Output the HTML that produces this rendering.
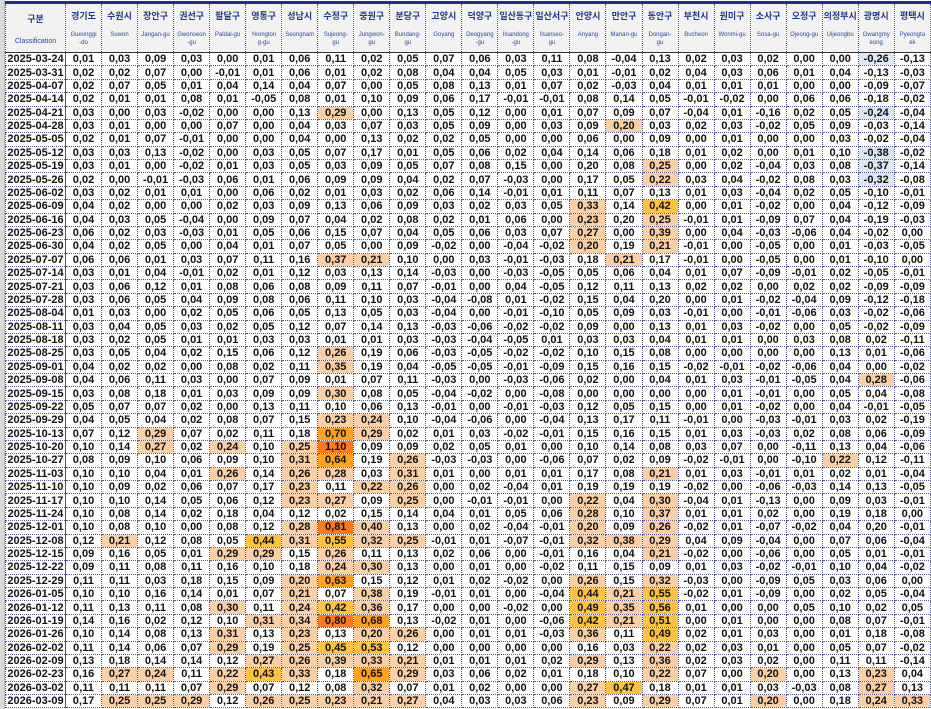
<!DOCTYPE html>
<html><head><meta charset="utf-8">
<style>
html,body{margin:0;padding:0;background:#fff;width:931px;height:709px;overflow:hidden}
.wrap{position:absolute;left:0;top:0;width:931px;height:709px}
.strip{position:absolute;left:0;top:0;width:4px;height:709px;background:#d9d9d9;border-right:1px solid #bdbdbd}
table{position:absolute;left:5px;top:1px;border-collapse:collapse;table-layout:fixed;width:926px;font-family:"Liberation Sans","Noto Sans CJK KR",sans-serif}
col.dc{width:60px}
td,th{border:1px dotted #5a5a8c;padding:0;text-align:center;overflow:hidden;white-space:nowrap}
thead th{border-top:3px solid #1c2f8c;border-bottom:1px solid #333;background:#f2f2f2;height:48px;vertical-align:top;color:#1f3a8a;font-weight:bold}
thead th .k{display:block;font-size:9px;margin-top:7px;height:20px;line-height:11px}
thead th .e{display:block;font-size:6px;line-height:8px;color:#2a4aa0;font-weight:normal}
tbody tr{height:13.38px}
tbody th{font-size:11px;font-weight:bold;color:#111;border-right:1px solid #555;text-align:center;padding:0;line-height:12px;background:#fff}
td{font-size:11px;font-weight:bold;color:#111;line-height:12px}
.a{background:#fbcfa6}.b{background:#fdc23e}.c{background:#ffa11c}.d{background:#ff781c}.n{background:#dce9f4}
</style></head><body><div class="wrap"><div class="strip"></div>
<table>
<colgroup><col class="dc"><col span="24"></colgroup>
<thead><tr>
<th><span class="k" style="margin-top:10px">구분</span><span class="e" style="font-size:7px;margin-top:4px">Classification</span></th>
<th><span class="k">경기도</span><span class="e">Gueonggi<br>-do</span></th>
<th><span class="k">수원시</span><span class="e">Suwon</span></th>
<th><span class="k">장안구</span><span class="e">Jangan-gu</span></th>
<th><span class="k">권선구</span><span class="e">Gwonseon<br>-gu</span></th>
<th><span class="k">팔달구</span><span class="e">Paldal-gu</span></th>
<th><span class="k">영통구</span><span class="e">Yeongton<br>g-gu</span></th>
<th><span class="k">성남시</span><span class="e">Seongnam</span></th>
<th><span class="k">수정구</span><span class="e">Sujeong-<br>gu</span></th>
<th><span class="k">중원구</span><span class="e">Jungwon-<br>gu</span></th>
<th><span class="k">분당구</span><span class="e">Bundang-<br>gu</span></th>
<th><span class="k">고양시</span><span class="e">Goyang</span></th>
<th><span class="k">덕양구</span><span class="e">Deogyang<br>-gu</span></th>
<th><span class="k">일산동구</span><span class="e">Ilsandong<br>-gu</span></th>
<th><span class="k">일산서구</span><span class="e">Ilsanseo-<br>gu</span></th>
<th><span class="k">안양시</span><span class="e">Anyang</span></th>
<th><span class="k">만안구</span><span class="e">Manan-gu</span></th>
<th><span class="k">동안구</span><span class="e">Dongan-<br>gu</span></th>
<th><span class="k">부천시</span><span class="e">Bucheon</span></th>
<th><span class="k">원미구</span><span class="e">Wonmi-gu</span></th>
<th><span class="k">소사구</span><span class="e">Sosa-gu</span></th>
<th><span class="k">오정구</span><span class="e">Ojeong-gu</span></th>
<th><span class="k">의정부시</span><span class="e">Uijeongbu</span></th>
<th><span class="k">광명시</span><span class="e">Gwangmy<br>eong</span></th>
<th><span class="k">평택시</span><span class="e">Pyeongta<br>ek</span></th>
</tr></thead>
<tbody>
<tr><th>2025-03-24</th><td>0,01</td><td>0,03</td><td>0,09</td><td>0,03</td><td>0,00</td><td>0,01</td><td>0,06</td><td>0,11</td><td>0,02</td><td>0,05</td><td>0,07</td><td>0,06</td><td>0,03</td><td>0,11</td><td>0,08</td><td>-0,04</td><td>0,13</td><td>0,02</td><td>0,03</td><td>0,02</td><td>0,00</td><td>0,00</td><td class="n">-0,26</td><td>-0,13</td></tr>
<tr><th>2025-03-31</th><td>0,02</td><td>0,02</td><td>0,07</td><td>0,00</td><td>-0,01</td><td>0,01</td><td>0,06</td><td>0,01</td><td>0,02</td><td>0,08</td><td>0,04</td><td>0,04</td><td>0,05</td><td>0,03</td><td>0,01</td><td>-0,01</td><td>0,02</td><td>0,04</td><td>0,03</td><td>0,06</td><td>0,01</td><td>0,04</td><td>-0,13</td><td>-0,03</td></tr>
<tr><th>2025-04-07</th><td>0,02</td><td>0,07</td><td>0,05</td><td>0,01</td><td>0,04</td><td>0,14</td><td>0,04</td><td>0,07</td><td>0,00</td><td>0,05</td><td>0,08</td><td>0,13</td><td>0,01</td><td>0,07</td><td>0,02</td><td>-0,03</td><td>0,04</td><td>0,01</td><td>0,01</td><td>0,01</td><td>0,00</td><td>0,00</td><td>-0,09</td><td>-0,07</td></tr>
<tr><th>2025-04-14</th><td>0,02</td><td>0,01</td><td>0,01</td><td>0,08</td><td>0,01</td><td>-0,05</td><td>0,08</td><td>0,01</td><td>0,10</td><td>0,09</td><td>0,06</td><td>0,17</td><td>-0,01</td><td>-0,01</td><td>0,08</td><td>0,14</td><td>0,05</td><td>-0,01</td><td>-0,02</td><td>0,00</td><td>0,06</td><td>0,06</td><td>-0,18</td><td>-0,02</td></tr>
<tr><th>2025-04-21</th><td>0,03</td><td>0,00</td><td>0,03</td><td>-0,02</td><td>0,00</td><td>0,00</td><td>0,13</td><td class="a">0,29</td><td>0,00</td><td>0,13</td><td>0,05</td><td>0,12</td><td>0,00</td><td>0,01</td><td>0,07</td><td>0,09</td><td>0,07</td><td>-0,04</td><td>0,01</td><td>-0,16</td><td>0,02</td><td>0,05</td><td class="n">-0,24</td><td>-0,04</td></tr>
<tr><th>2025-04-28</th><td>0,03</td><td>0,01</td><td>0,00</td><td>0,00</td><td>0,07</td><td>0,00</td><td>0,04</td><td>0,03</td><td>0,07</td><td>0,03</td><td>0,05</td><td>0,09</td><td>0,00</td><td>0,03</td><td>0,09</td><td class="a">0,20</td><td>0,03</td><td>0,02</td><td>0,03</td><td>-0,02</td><td>0,05</td><td>0,09</td><td>-0,03</td><td>-0,14</td></tr>
<tr><th>2025-05-05</th><td>0,02</td><td>0,01</td><td>0,07</td><td>-0,01</td><td>0,00</td><td>0,00</td><td>0,04</td><td>0,00</td><td>0,13</td><td>0,02</td><td>0,02</td><td>0,05</td><td>0,00</td><td>0,00</td><td>0,06</td><td>0,00</td><td>0,09</td><td>0,00</td><td>0,01</td><td>0,00</td><td>0,00</td><td>0,03</td><td>-0,02</td><td>-0,04</td></tr>
<tr><th>2025-05-12</th><td>0,03</td><td>0,03</td><td>0,13</td><td>-0,02</td><td>0,00</td><td>0,03</td><td>0,05</td><td>0,07</td><td>0,17</td><td>0,01</td><td>0,05</td><td>0,06</td><td>0,02</td><td>0,04</td><td>0,14</td><td>0,06</td><td>0,18</td><td>0,01</td><td>0,02</td><td>0,00</td><td>0,01</td><td>0,10</td><td class="n">-0,38</td><td>-0,02</td></tr>
<tr><th>2025-05-19</th><td>0,03</td><td>0,01</td><td>0,00</td><td>-0,02</td><td>0,01</td><td>0,03</td><td>0,05</td><td>0,03</td><td>0,09</td><td>0,05</td><td>0,07</td><td>0,08</td><td>0,15</td><td>0,00</td><td>0,20</td><td>0,08</td><td class="a">0,25</td><td>0,00</td><td>0,02</td><td>-0,04</td><td>0,03</td><td>0,08</td><td class="n">-0,37</td><td>-0,14</td></tr>
<tr><th>2025-05-26</th><td>0,02</td><td>0,00</td><td>-0,01</td><td>-0,03</td><td>0,06</td><td>0,01</td><td>0,06</td><td>0,09</td><td>0,09</td><td>0,04</td><td>0,02</td><td>0,07</td><td>-0,03</td><td>0,00</td><td>0,17</td><td>0,05</td><td class="a">0,22</td><td>0,03</td><td>0,04</td><td>-0,02</td><td>0,08</td><td>0,03</td><td class="n">-0,32</td><td>-0,08</td></tr>
<tr><th>2025-06-02</th><td>0,03</td><td>0,02</td><td>0,01</td><td>0,01</td><td>0,00</td><td>0,06</td><td>0,02</td><td>0,01</td><td>0,03</td><td>0,02</td><td>0,06</td><td>0,14</td><td>-0,01</td><td>0,01</td><td>0,11</td><td>0,07</td><td>0,13</td><td>0,01</td><td>0,03</td><td>-0,04</td><td>0,02</td><td>0,05</td><td>-0,10</td><td>-0,01</td></tr>
<tr><th>2025-06-09</th><td>0,04</td><td>0,02</td><td>0,00</td><td>0,00</td><td>0,02</td><td>0,03</td><td>0,09</td><td>0,13</td><td>0,06</td><td>0,09</td><td>0,03</td><td>0,02</td><td>0,03</td><td>0,05</td><td class="a">0,33</td><td>0,14</td><td class="b">0,42</td><td>0,00</td><td>0,01</td><td>-0,02</td><td>0,00</td><td>0,04</td><td>-0,12</td><td>-0,09</td></tr>
<tr><th>2025-06-16</th><td>0,04</td><td>0,03</td><td>0,05</td><td>-0,04</td><td>0,00</td><td>0,09</td><td>0,07</td><td>0,04</td><td>0,02</td><td>0,08</td><td>0,02</td><td>0,01</td><td>0,06</td><td>0,00</td><td class="a">0,23</td><td>0,20</td><td class="a">0,25</td><td>-0,01</td><td>0,01</td><td>-0,09</td><td>0,07</td><td>0,04</td><td>-0,19</td><td>-0,03</td></tr>
<tr><th>2025-06-23</th><td>0,06</td><td>0,02</td><td>0,03</td><td>-0,03</td><td>0,01</td><td>0,05</td><td>0,06</td><td>0,15</td><td>0,07</td><td>0,04</td><td>0,05</td><td>0,06</td><td>0,03</td><td>0,07</td><td class="a">0,27</td><td>0,00</td><td class="a">0,39</td><td>0,00</td><td>0,04</td><td>-0,03</td><td>-0,06</td><td>0,04</td><td>-0,02</td><td>0,00</td></tr>
<tr><th>2025-06-30</th><td>0,04</td><td>0,02</td><td>0,05</td><td>0,00</td><td>0,04</td><td>0,01</td><td>0,07</td><td>0,05</td><td>0,00</td><td>0,09</td><td>-0,02</td><td>0,00</td><td>-0,04</td><td>-0,02</td><td class="a">0,20</td><td>0,19</td><td class="a">0,21</td><td>-0,01</td><td>0,00</td><td>-0,05</td><td>0,00</td><td>0,01</td><td>-0,03</td><td>-0,05</td></tr>
<tr><th>2025-07-07</th><td>0,06</td><td>0,06</td><td>0,01</td><td>0,03</td><td>0,07</td><td>0,11</td><td>0,16</td><td class="a">0,37</td><td class="a">0,21</td><td>0,10</td><td>0,00</td><td>0,03</td><td>-0,01</td><td>-0,03</td><td>0,18</td><td class="a">0,21</td><td>0,17</td><td>-0,01</td><td>0,00</td><td>-0,05</td><td>0,00</td><td>0,01</td><td>-0,10</td><td>0,00</td></tr>
<tr><th>2025-07-14</th><td>0,03</td><td>0,01</td><td>0,04</td><td>-0,01</td><td>0,02</td><td>0,01</td><td>0,12</td><td>0,03</td><td>0,13</td><td>0,14</td><td>-0,03</td><td>0,00</td><td>-0,03</td><td>-0,05</td><td>0,05</td><td>0,06</td><td>0,04</td><td>0,01</td><td>0,07</td><td>-0,09</td><td>-0,01</td><td>0,02</td><td>-0,05</td><td>-0,01</td></tr>
<tr><th>2025-07-21</th><td>0,03</td><td>0,06</td><td>0,12</td><td>0,01</td><td>0,08</td><td>0,06</td><td>0,08</td><td>0,09</td><td>0,11</td><td>0,07</td><td>-0,01</td><td>0,00</td><td>0,04</td><td>-0,05</td><td>0,12</td><td>0,11</td><td>0,13</td><td>0,02</td><td>0,02</td><td>0,00</td><td>0,02</td><td>0,02</td><td>-0,09</td><td>-0,09</td></tr>
<tr><th>2025-07-28</th><td>0,03</td><td>0,06</td><td>0,05</td><td>0,04</td><td>0,09</td><td>0,08</td><td>0,06</td><td>0,11</td><td>0,10</td><td>0,03</td><td>-0,04</td><td>-0,08</td><td>0,01</td><td>-0,02</td><td>0,15</td><td>0,04</td><td>0,20</td><td>0,00</td><td>0,01</td><td>-0,02</td><td>-0,04</td><td>0,09</td><td>-0,12</td><td>-0,18</td></tr>
<tr><th>2025-08-04</th><td>0,01</td><td>0,03</td><td>0,00</td><td>0,02</td><td>0,05</td><td>0,06</td><td>0,05</td><td>0,13</td><td>0,05</td><td>0,03</td><td>-0,04</td><td>0,00</td><td>-0,01</td><td>-0,10</td><td>0,05</td><td>0,09</td><td>0,03</td><td>-0,01</td><td>0,00</td><td>-0,01</td><td>-0,06</td><td>0,03</td><td>-0,02</td><td>-0,06</td></tr>
<tr><th>2025-08-11</th><td>0,03</td><td>0,04</td><td>0,05</td><td>0,03</td><td>0,02</td><td>0,05</td><td>0,12</td><td>0,07</td><td>0,14</td><td>0,13</td><td>-0,03</td><td>-0,06</td><td>-0,02</td><td>-0,02</td><td>0,09</td><td>0,00</td><td>0,13</td><td>0,01</td><td>0,03</td><td>-0,02</td><td>0,00</td><td>0,05</td><td>-0,02</td><td>-0,09</td></tr>
<tr><th>2025-08-18</th><td>0,03</td><td>0,02</td><td>0,05</td><td>0,01</td><td>0,01</td><td>0,03</td><td>0,03</td><td>0,01</td><td>0,01</td><td>0,03</td><td>-0,03</td><td>-0,04</td><td>-0,05</td><td>0,01</td><td>0,03</td><td>0,03</td><td>0,04</td><td>0,01</td><td>0,01</td><td>0,00</td><td>0,03</td><td>0,08</td><td>0,02</td><td>-0,11</td></tr>
<tr><th>2025-08-25</th><td>0,03</td><td>0,05</td><td>0,04</td><td>0,02</td><td>0,15</td><td>0,06</td><td>0,12</td><td class="a">0,26</td><td>0,19</td><td>0,06</td><td>-0,03</td><td>-0,05</td><td>-0,02</td><td>-0,02</td><td>0,10</td><td>0,15</td><td>0,08</td><td>0,00</td><td>0,00</td><td>0,00</td><td>0,00</td><td>0,13</td><td>0,01</td><td>-0,06</td></tr>
<tr><th>2025-09-01</th><td>0,04</td><td>0,02</td><td>0,02</td><td>0,00</td><td>0,08</td><td>0,02</td><td>0,11</td><td class="a">0,35</td><td>0,19</td><td>0,04</td><td>-0,05</td><td>-0,05</td><td>-0,01</td><td>-0,09</td><td>0,15</td><td>0,16</td><td>0,15</td><td>-0,02</td><td>-0,01</td><td>-0,02</td><td>-0,06</td><td>0,04</td><td>0,00</td><td>-0,02</td></tr>
<tr><th>2025-09-08</th><td>0,04</td><td>0,06</td><td>0,11</td><td>0,03</td><td>0,00</td><td>0,07</td><td>0,09</td><td>0,01</td><td>0,07</td><td>0,11</td><td>-0,03</td><td>0,00</td><td>-0,03</td><td>-0,06</td><td>0,02</td><td>0,00</td><td>0,04</td><td>0,01</td><td>0,03</td><td>-0,01</td><td>-0,05</td><td>0,04</td><td class="a">0,28</td><td>-0,06</td></tr>
<tr><th>2025-09-15</th><td>0,03</td><td>0,08</td><td>0,18</td><td>0,01</td><td>0,03</td><td>0,09</td><td>0,09</td><td class="a">0,30</td><td>0,08</td><td>0,05</td><td>-0,04</td><td>-0,02</td><td>0,00</td><td>-0,08</td><td>0,00</td><td>0,00</td><td>0,00</td><td>0,00</td><td>0,01</td><td>-0,01</td><td>0,00</td><td>0,05</td><td>0,04</td><td>-0,08</td></tr>
<tr><th>2025-09-22</th><td>0,05</td><td>0,07</td><td>0,07</td><td>0,02</td><td>0,00</td><td>0,13</td><td>0,11</td><td>0,10</td><td>0,06</td><td>0,13</td><td>-0,01</td><td>0,00</td><td>-0,01</td><td>-0,03</td><td>0,12</td><td>0,05</td><td>0,15</td><td>0,00</td><td>0,01</td><td>-0,02</td><td>0,00</td><td>0,04</td><td>-0,01</td><td>-0,05</td></tr>
<tr><th>2025-09-29</th><td>0,04</td><td>0,05</td><td>0,04</td><td>0,02</td><td>0,08</td><td>0,07</td><td>0,15</td><td class="a">0,23</td><td class="a">0,24</td><td>0,10</td><td>-0,04</td><td>-0,06</td><td>0,00</td><td>-0,04</td><td>0,13</td><td>0,17</td><td>0,11</td><td>-0,01</td><td>0,00</td><td>-0,03</td><td>-0,01</td><td>0,03</td><td>0,02</td><td>-0,19</td></tr>
<tr><th>2025-10-13</th><td>0,07</td><td>0,12</td><td class="a">0,29</td><td>0,07</td><td>0,02</td><td>0,11</td><td>0,18</td><td class="c">0,70</td><td class="a">0,29</td><td>0,02</td><td>0,01</td><td>0,03</td><td>-0,02</td><td>-0,01</td><td>0,15</td><td>0,16</td><td>0,15</td><td>0,01</td><td>0,03</td><td>-0,03</td><td>0,02</td><td>0,08</td><td>0,06</td><td>-0,09</td></tr>
<tr><th>2025-10-20</th><td>0,10</td><td>0,14</td><td class="a">0,27</td><td>0,02</td><td class="a">0,24</td><td>0,10</td><td class="a">0,25</td><td class="d">1,10</td><td>0,09</td><td>0,09</td><td>0,02</td><td>0,05</td><td>0,01</td><td>0,00</td><td>0,10</td><td>0,14</td><td>0,08</td><td>0,03</td><td>0,07</td><td>0,00</td><td>-0,11</td><td>0,13</td><td>0,04</td><td>-0,06</td></tr>
<tr><th>2025-10-27</th><td>0,08</td><td>0,09</td><td>0,10</td><td>0,06</td><td>0,09</td><td>0,10</td><td class="a">0,31</td><td class="c">0,64</td><td>0,19</td><td class="a">0,26</td><td>-0,03</td><td>-0,03</td><td>0,00</td><td>-0,06</td><td>0,07</td><td>0,02</td><td>0,09</td><td>-0,02</td><td>-0,01</td><td>0,00</td><td>-0,10</td><td class="a">0,22</td><td>0,12</td><td>-0,11</td></tr>
<tr><th>2025-11-03</th><td>0,10</td><td>0,10</td><td>0,04</td><td>0,01</td><td class="a">0,26</td><td>0,14</td><td class="a">0,26</td><td class="a">0,28</td><td>0,03</td><td class="a">0,31</td><td>0,01</td><td>0,00</td><td>0,01</td><td>0,01</td><td>0,17</td><td>0,08</td><td class="a">0,21</td><td>0,01</td><td>0,03</td><td>-0,01</td><td>0,01</td><td>0,02</td><td>0,01</td><td>-0,04</td></tr>
<tr><th>2025-11-10</th><td>0,10</td><td>0,09</td><td>0,02</td><td>0,06</td><td>0,07</td><td>0,17</td><td class="a">0,23</td><td>0,11</td><td class="a">0,22</td><td class="a">0,26</td><td>0,00</td><td>0,02</td><td>-0,04</td><td>0,01</td><td>0,19</td><td>0,19</td><td>0,19</td><td>-0,02</td><td>0,00</td><td>-0,06</td><td>-0,03</td><td>0,14</td><td>0,13</td><td>-0,05</td></tr>
<tr><th>2025-11-17</th><td>0,10</td><td>0,10</td><td>0,14</td><td>0,05</td><td>0,06</td><td>0,12</td><td class="a">0,23</td><td class="a">0,27</td><td>0,09</td><td class="a">0,25</td><td>0,00</td><td>-0,01</td><td>-0,01</td><td>0,00</td><td class="a">0,22</td><td>0,04</td><td class="a">0,30</td><td>-0,04</td><td>0,01</td><td>-0,13</td><td>0,00</td><td>0,09</td><td>0,03</td><td>-0,01</td></tr>
<tr><th>2025-11-24</th><td>0,10</td><td>0,08</td><td>0,14</td><td>0,02</td><td>0,18</td><td>0,04</td><td>0,12</td><td>0,02</td><td>0,15</td><td>0,14</td><td>0,04</td><td>0,01</td><td>0,05</td><td>0,06</td><td class="a">0,28</td><td>0,10</td><td class="a">0,37</td><td>0,01</td><td>0,01</td><td>0,02</td><td>0,00</td><td>0,19</td><td>0,18</td><td>0,00</td></tr>
<tr><th>2025-12-01</th><td>0,10</td><td>0,08</td><td>0,10</td><td>0,00</td><td>0,08</td><td>0,12</td><td class="a">0,28</td><td class="d">0,81</td><td class="a">0,40</td><td>0,13</td><td>0,00</td><td>0,02</td><td>-0,04</td><td>-0,01</td><td class="a">0,20</td><td>0,09</td><td class="a">0,26</td><td>-0,02</td><td>0,01</td><td>-0,07</td><td>-0,02</td><td>0,04</td><td>0,20</td><td>-0,01</td></tr>
<tr><th>2025-12-08</th><td>0,12</td><td class="a">0,21</td><td>0,12</td><td>0,08</td><td>0,05</td><td class="b">0,44</td><td class="a">0,31</td><td class="b">0,55</td><td class="a">0,32</td><td class="a">0,25</td><td>-0,01</td><td>0,01</td><td>-0,07</td><td>-0,01</td><td class="a">0,32</td><td class="a">0,38</td><td class="a">0,29</td><td>0,04</td><td>0,09</td><td>-0,04</td><td>0,00</td><td>0,07</td><td>0,06</td><td>-0,04</td></tr>
<tr><th>2025-12-15</th><td>0,09</td><td>0,16</td><td>0,05</td><td>0,01</td><td class="a">0,29</td><td class="a">0,29</td><td>0,15</td><td class="a">0,26</td><td>0,11</td><td>0,13</td><td>0,02</td><td>0,06</td><td>0,00</td><td>-0,01</td><td>0,16</td><td>0,04</td><td class="a">0,21</td><td>-0,02</td><td>0,00</td><td>-0,06</td><td>0,00</td><td>0,05</td><td>0,01</td><td>-0,01</td></tr>
<tr><th>2025-12-22</th><td>0,09</td><td>0,11</td><td>0,08</td><td>0,11</td><td>0,16</td><td>0,10</td><td>0,18</td><td class="a">0,24</td><td class="a">0,30</td><td>0,13</td><td>0,00</td><td>0,01</td><td>0,00</td><td>-0,02</td><td>0,11</td><td>0,15</td><td>0,09</td><td>0,01</td><td>0,03</td><td>-0,02</td><td>-0,01</td><td>0,10</td><td>0,04</td><td>-0,02</td></tr>
<tr><th>2025-12-29</th><td>0,11</td><td>0,11</td><td>0,03</td><td>0,18</td><td>0,15</td><td>0,09</td><td class="a">0,20</td><td class="c">0,63</td><td>0,15</td><td>0,12</td><td>0,01</td><td>0,02</td><td>-0,02</td><td>0,00</td><td class="a">0,26</td><td>0,15</td><td class="a">0,32</td><td>-0,03</td><td>0,00</td><td>-0,09</td><td>0,05</td><td>0,03</td><td>0,06</td><td>0,00</td></tr>
<tr><th>2026-01-05</th><td>0,10</td><td>0,10</td><td>0,16</td><td>0,14</td><td>0,01</td><td>0,07</td><td class="a">0,21</td><td>0,07</td><td class="a">0,38</td><td>0,19</td><td>-0,01</td><td>0,01</td><td>0,00</td><td>-0,04</td><td class="b">0,44</td><td class="a">0,21</td><td class="b">0,55</td><td>-0,02</td><td>0,01</td><td>-0,09</td><td>0,00</td><td>0,02</td><td>0,05</td><td>-0,04</td></tr>
<tr><th>2026-01-12</th><td>0,11</td><td>0,13</td><td>0,11</td><td>0,08</td><td class="a">0,30</td><td>0,11</td><td class="a">0,24</td><td class="b">0,42</td><td class="a">0,36</td><td>0,17</td><td>0,00</td><td>0,00</td><td>-0,02</td><td>0,00</td><td class="b">0,49</td><td class="a">0,35</td><td class="b">0,56</td><td>0,01</td><td>0,00</td><td>0,00</td><td>0,05</td><td>0,10</td><td>0,02</td><td>0,05</td></tr>
<tr><th>2026-01-19</th><td>0,14</td><td>0,16</td><td>0,02</td><td>0,12</td><td>0,10</td><td class="a">0,31</td><td class="a">0,34</td><td class="d">0,80</td><td class="c">0,68</td><td>0,13</td><td>-0,02</td><td>0,01</td><td>0,00</td><td>-0,06</td><td class="b">0,42</td><td class="a">0,21</td><td class="b">0,51</td><td>0,00</td><td>0,01</td><td>0,00</td><td>0,00</td><td>0,08</td><td>0,07</td><td>-0,01</td></tr>
<tr><th>2026-01-26</th><td>0,10</td><td>0,14</td><td>0,08</td><td>0,13</td><td class="a">0,31</td><td>0,13</td><td class="a">0,23</td><td>0,13</td><td class="a">0,20</td><td class="a">0,26</td><td>0,00</td><td>0,01</td><td>0,01</td><td>-0,03</td><td class="a">0,36</td><td>0,11</td><td class="b">0,49</td><td>0,02</td><td>0,01</td><td>0,03</td><td>0,00</td><td>0,01</td><td>0,18</td><td>-0,08</td></tr>
<tr><th>2026-02-02</th><td>0,11</td><td>0,14</td><td>0,06</td><td>0,07</td><td class="a">0,29</td><td>0,19</td><td class="a">0,25</td><td class="b">0,45</td><td class="b">0,53</td><td>0,12</td><td>0,00</td><td>0,00</td><td>0,00</td><td>0,00</td><td>0,16</td><td>0,03</td><td class="a">0,22</td><td>0,02</td><td>0,03</td><td>0,01</td><td>0,00</td><td>0,05</td><td>0,07</td><td>-0,02</td></tr>
<tr><th>2026-02-09</th><td>0,13</td><td>0,18</td><td>0,14</td><td>0,14</td><td>0,12</td><td class="a">0,27</td><td class="a">0,26</td><td class="a">0,39</td><td class="a">0,33</td><td class="a">0,21</td><td>0,01</td><td>0,01</td><td>0,01</td><td>0,02</td><td class="a">0,29</td><td>0,13</td><td class="a">0,36</td><td>0,02</td><td>0,03</td><td>0,02</td><td>0,00</td><td>0,11</td><td>0,11</td><td>-0,14</td></tr>
<tr><th>2026-02-23</th><td>0,16</td><td class="a">0,27</td><td class="a">0,24</td><td>0,11</td><td class="a">0,22</td><td class="b">0,43</td><td class="a">0,33</td><td>0,18</td><td class="c">0,65</td><td class="a">0,29</td><td>0,03</td><td>0,06</td><td>0,02</td><td>0,01</td><td>0,18</td><td>0,10</td><td class="a">0,22</td><td>0,07</td><td>0,00</td><td class="a">0,20</td><td>0,00</td><td>0,13</td><td class="a">0,23</td><td>0,04</td></tr>
<tr><th>2026-03-02</th><td>0,11</td><td>0,11</td><td>0,11</td><td>0,07</td><td class="a">0,29</td><td>0,07</td><td>0,12</td><td>0,08</td><td class="a">0,32</td><td>0,07</td><td>0,01</td><td>0,02</td><td>0,00</td><td>0,00</td><td class="a">0,27</td><td class="b">0,47</td><td>0,18</td><td>0,01</td><td>0,01</td><td>0,03</td><td>-0,03</td><td>0,08</td><td class="a">0,27</td><td>0,13</td></tr>
<tr><th>2026-03-09</th><td>0,17</td><td class="a">0,25</td><td class="a">0,25</td><td class="a">0,29</td><td>0,12</td><td class="a">0,26</td><td class="a">0,25</td><td class="a">0,23</td><td class="a">0,21</td><td class="a">0,27</td><td>0,04</td><td>0,03</td><td>0,03</td><td>0,06</td><td class="a">0,23</td><td>0,09</td><td class="a">0,29</td><td>0,07</td><td>0,01</td><td class="a">0,20</td><td>0,00</td><td>0,18</td><td class="a">0,24</td><td class="a">0,33</td></tr>
</tbody></table></div></body></html>
